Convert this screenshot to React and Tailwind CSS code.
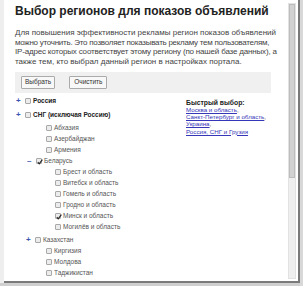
import React from "react";

function Box({ checked }) {
  return (
    <span className="relative inline-block w-[6px] h-[6px] border border-[#a8a8a8] bg-[#ececec] rounded-[1px] shrink-0">
      {checked && (
        <svg viewBox="0 0 6 6" className="absolute left-0 top-0 w-[6px] h-[6px] overflow-visible">
          <path d="M0.8 3.2 L2.2 4.8 L5.4 0.6" fill="none" stroke="#222" strokeWidth="1.1" />
        </svg>
      )}
    </span>
  );
}

function Row({ pl, exp, checked, bold, label, mt = "mt-0" }) {
  return (
    <div className={`flex items-center h-[11px] ${pl} ${mt}`}>
      <span className="w-[9px] shrink-0 text-[#3a55b0] text-[8px] leading-none font-bold">{exp}</span>
      <Box checked={checked} />
      <span className={`ml-[2px] whitespace-nowrap text-[6.5px] ${bold ? "font-bold text-[#222]" : "text-[#555]"}`}>{label}</span>
    </div>
  );
}

export default function App() {
  return (
    <div className="w-[303px] h-[286px] bg-[#cfcfcf] flex overflow-hidden" style={{ fontFamily: '"Liberation Sans", Arial, sans-serif' }}>
      <div className="w-[4px] h-[283px] bg-[#eeeeee] shrink-0" />
      <div className="w-[296px] h-[283px] bg-white border-r-2 border-b-2 border-[#7a7a7a] flex shrink-0">
        <div className="flex-1 pl-[11px] pt-[3px] overflow-hidden">
          <h1 className="text-[12px] font-bold text-[#222] leading-[16px]">Выбор регионов для показов объявлений</h1>
          <div className="mt-[9px] text-[8px] leading-[9.7px] text-[#444] whitespace-nowrap">
            <div>Для повышения эффективности рекламы регион показов объявлений</div>
            <div className="tracking-[-0.26px]">можно уточнить. Это позволяет показывать рекламу тем пользователям,</div>
            <div className="tracking-[-0.18px]">IP-адрес которых соответствует этому региону (по нашей базе данных), а</div>
            <div>также тем, кто выбрал данный регион в настройках портала.</div>
          </div>
          <div className="mt-[5px] w-[256px] h-[21px] bg-[#f0f0f0] flex items-center gap-[14px] pl-[6px]">
            <span className="h-[13px] px-[3px] border border-[#aaa] bg-[#f8f8f8] rounded-[1px] text-[6.5px] text-[#333] flex items-center">Выбрать</span>
            <span className="h-[13px] px-[4px] border border-[#aaa] bg-[#f8f8f8] rounded-[1px] text-[6.5px] text-[#333] flex items-center">Очистить</span>
          </div>
          <div className="flex mt-[3px]">
            <div className="w-[171px] shrink-0">
              <Row pl="pl-[1px]" exp="+" label="Россия" bold />
              <Row pl="pl-[1px]" exp="+" label="СНГ (исключая Россию)" bold mt="mt-[3px]" />
              <Row pl="pl-[22px]" exp="" label="Абхазия" mt="mt-[2px]" />
              <Row pl="pl-[22px]" exp="" label="Азербайджан" />
              <Row pl="pl-[22px]" exp="" label="Армения" />
              <Row pl="pl-[12px]" exp="–" label="Беларусь" checked />
              <Row pl="pl-[31px]" exp="" label="Брест и область" />
              <Row pl="pl-[31px]" exp="" label="Витебск и область" />
              <Row pl="pl-[31px]" exp="" label="Гомель и область" />
              <Row pl="pl-[31px]" exp="" label="Гродно и область" />
              <Row pl="pl-[31px]" exp="" label="Минск и область" checked />
              <Row pl="pl-[31px]" exp="" label="Могилёв и область" />
              <Row pl="pl-[11px]" exp="+" label="Казахстан" mt="mt-[2px]" />
              <Row pl="pl-[22px]" exp="" label="Киргизия" />
              <Row pl="pl-[22px]" exp="" label="Молдова" />
              <Row pl="pl-[22px]" exp="" label="Таджикистан" />
            </div>
            <div className="pt-[3px] text-[6.2px] leading-[7.2px] text-[#3636b8]">
              <div className="font-bold text-[#222] text-[6.8px]">Быстрый выбор:</div>
              <div><span className="underline">Москва и область</span><span className="text-[#333]">,</span></div>
              <div><span className="underline">Санкт-Петербург и область</span><span className="text-[#333]">,</span></div>
              <div><span className="underline">Украина</span><span className="text-[#333]">,</span></div>
              <div><span className="underline">Россия, СНГ и Грузия</span></div>
            </div>
          </div>
        </div>
        <div className="w-[9px] pt-[3px] pb-[2px] mr-[1px] shrink-0">
          <div className="w-[8px] h-full bg-[#efefef] border border-[#e2e2e2] flex flex-col">
            <div className="h-[174px] bg-[#d2d2d2] border border-[#bdbdbd]" />
          </div>
        </div>
      </div>
      <div className="flex-1 bg-[#d8d8d8]" />
    </div>
  );
}
